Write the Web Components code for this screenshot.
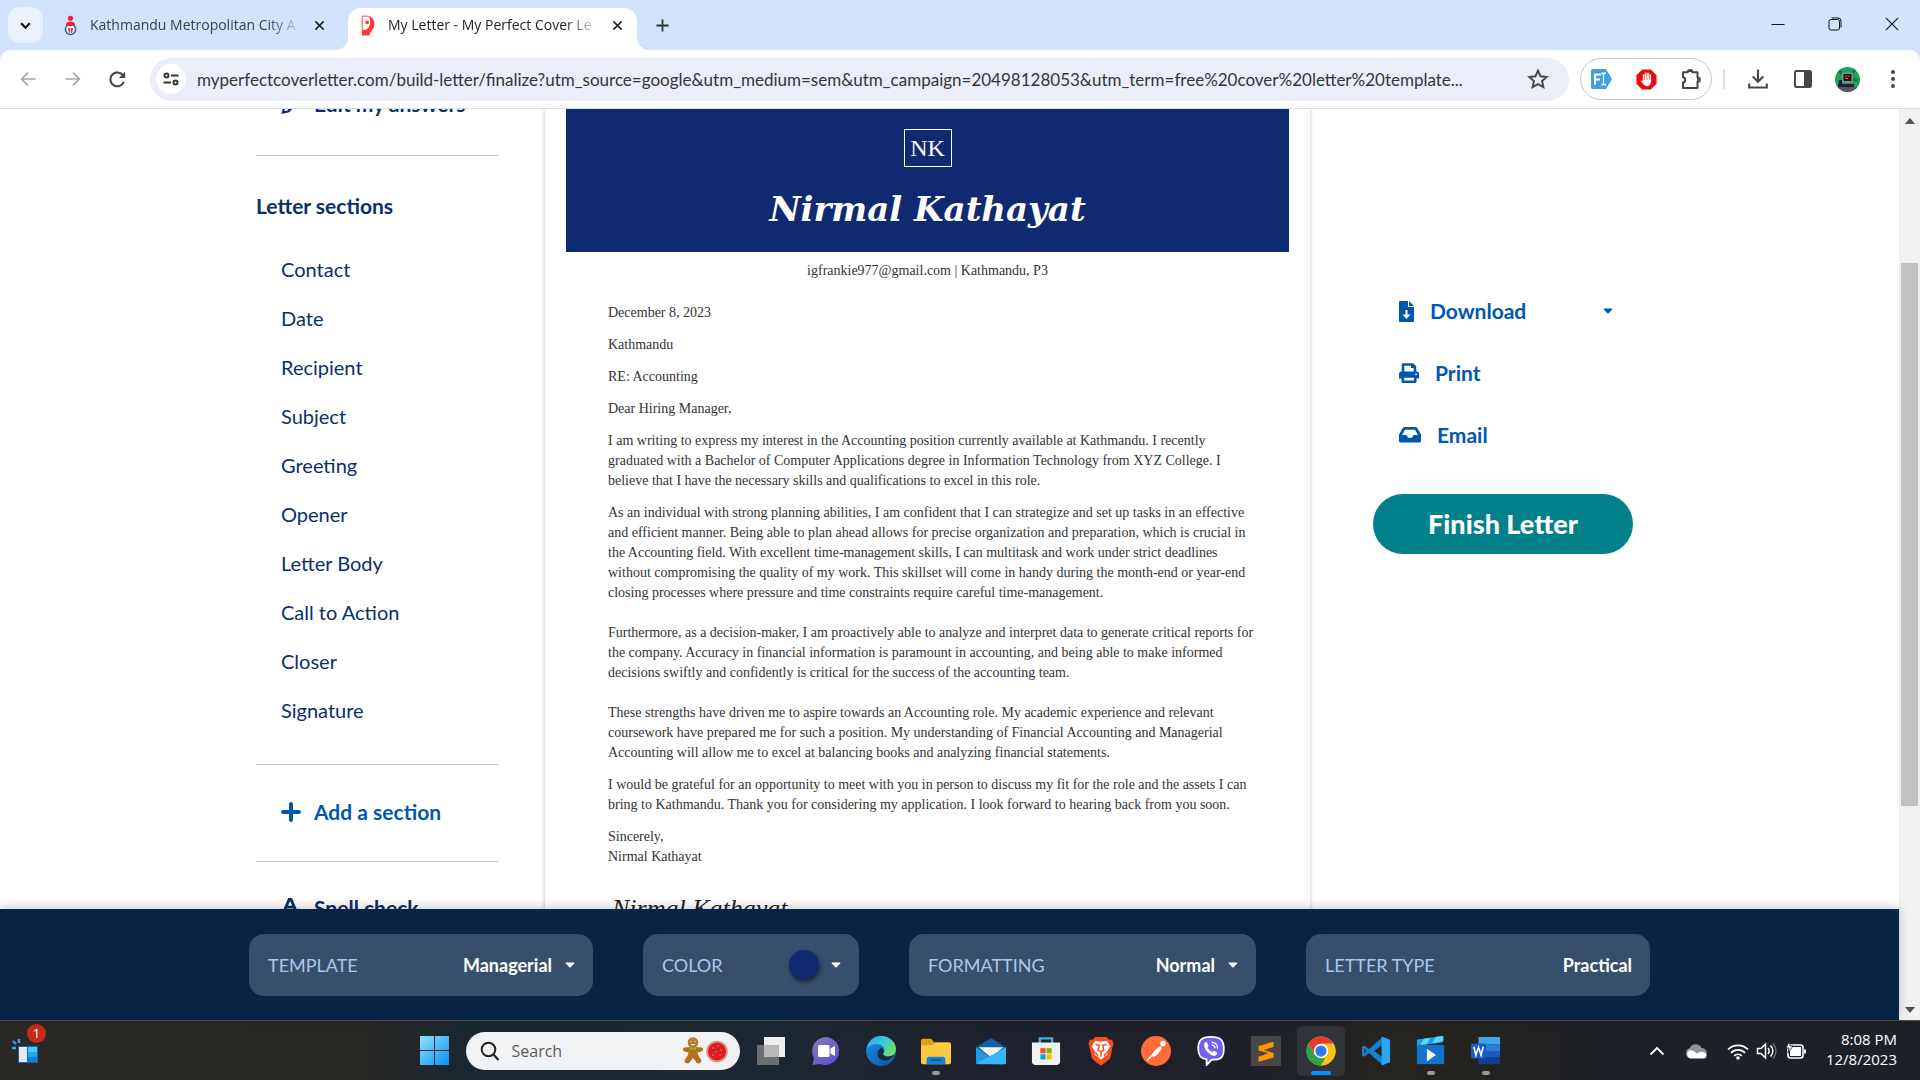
<!DOCTYPE html>
<html lang="en">
<head>
<meta charset="utf-8">
<title>My Letter - My Perfect Cover Letter</title>
<style>
  html, body { margin: 0; height: 100%; }
  body { font-family: "Open Sans", "Noto Sans", sans-serif; overflow: hidden; background: #fff; }
</style>
</head>
<body>
<desktop-shell></desktop-shell>

<script>
const ICONS = {
  chevron: ['0 0 12 12', '<path d="M2 4l4 4 4-4" fill="none" stroke="currentColor" stroke-width="2"/>'],
  close: ['0 0 12 12', '<path d="M1.500 1.500l9 9m0-9l-9 9" fill="none" stroke="currentColor" stroke-width="1.700"/>'],
  plus: ['0 0 16 16', '<path d="M8 1.500v13M1.500 8h13" fill="none" stroke="currentColor" stroke-width="1.900"/>'],
  kathmandu: ['0 0 20 24', '<circle cx="10" cy="16.500" r="6" fill="#fff" stroke="#1d6f82" stroke-width="1.800"/><circle cx="10" cy="3.500" r="3" fill="#f02040"/><path d="M4.500 11c.5-3 2.500-3.800 5.500-3.800s5 .8 5.500 3.800c-1.500 1.300-3.500 1.800-5.500 1.800S6 12.300 4.500 11z" fill="#f02040"/><path d="M7 15h2.500v5.500L8 21zM13 15h-2.500v5.500L12 21z" fill="#e0304a"/>'],
  mpcl: ['0 0 16 24', '<path d="M1.500 18V1.500H7a7.500 7.500 0 0 1 7.500 7.500" fill="none" stroke="#ff8580" stroke-width="1.800"/><path d="M1 23.500V17.500c5 0 8-2 9-6 .8-3 .5-7-.8-9.500 4 1.300 6.300 4.500 6.100 9-.2 5-4.300 7-5.800 12.500z" fill="#ff3b36"/><circle cx="7" cy="8.500" r="2.100" fill="#ff3b36"/>'],
  minimize: ['0 0 14 14', '<path d="M.5 7.500h13" stroke="#111" stroke-width="1"/>'],
  restore: ['0 0 14 14', '<rect x="1" y="2.500" width="10.500" height="10.500" rx="2" fill="none" stroke="#111"/><path d="M3.500 1h6.500a3 3 0 0 1 3 3v6.500" fill="none" stroke="#111"/>'],
  winclose: ['0 0 14 14', '<path d="M.8.8l12.400 12.400m0-12.400L.8 13.200" stroke="#111" stroke-width="1.100"/>'],
  back: ['0 0 16 16', '<path d="M15.500 8H2M8 1.600L1.600 8 8 14.400" fill="none" stroke="currentColor" stroke-width="1.700"/>'],
  forward: ['0 0 16 16', '<path d="M.5 8H14M8 1.600L14.400 8 8 14.400" fill="none" stroke="currentColor" stroke-width="1.700"/>'],
  reload: ['0 0 16 16', '<path d="M13.900 10.200A6.500 6.500 0 1 1 13 3.900" fill="none" stroke="currentColor" stroke-width="2"/><path d="M15.200.5v6H9.400z" fill="currentColor"/>'],
  tune: ['0 0 16 14', '<g fill="none" stroke="#333" stroke-width="2"><circle cx="3.500" cy="3.500" r="2"/><path d="M8 3.500h7.500M.5 10.500H8"/><circle cx="12.500" cy="10.500" r="2"/></g>'],
  star: ['0 0 20 20', '<path d="M10 2.400l2.300 5.100 5.600.6-4.200 3.800 1.200 5.500L10 14.600l-4.900 2.800 1.200-5.500L2.100 8.100l5.600-.6z" fill="none" stroke="currentColor" stroke-width="1.800"/>'],
  fi: ['0 0 21 20', '<path d="M1.500 0H15l6 10-6 10H1.500A1.500 1.500 0 0 1 0 18.500v-17A1.500 1.500 0 0 1 1.500 0z" fill="#3f9fe0"/><path d="M4 16V5.500h6M4 10.500h5" fill="none" stroke="#fff" stroke-width="2"/><path d="M10.500 4c1.500 0 2 .5 2 1.500v9c0 1-.5 1.500-2 1.500M15 4c-1.500 0-2.500.5-2.500 1.500v9c0 1 1 1.500 2.500 1.500" fill="none" stroke="#fff" stroke-width="1.300"/>'],
  adblock: ['0 0 22 22', '<path d="M6.500.5h9l6 6v9l-6 6h-9l-6-6v-9z" fill="#ea0b0b"/><path d="M8 6v7M10.300 4.500v8M12.600 4.500v8M14.900 6v7" stroke="#fff" stroke-width="1.700" stroke-linecap="round"/><path d="M7.200 11.500h8.500c0 4-1 6.500-4 6.500-2.500 0-4.500-2.200-6.500-5.300.6-.9 1.400-.6 2 .1z" fill="#fff"/>'],
  puzzle: ['0 0 22 22', '<path d="M3 4.200h4.800a2.300 2.300 0 0 1 4.600 0h5.100v5.200a2.300 2.300 0 0 1 0 4.600v6H3v-5.500c3-.5 3-4.700 0-5.200z" fill="none" stroke="currentColor" stroke-width="2" stroke-linejoin="round"/><path d="M17 9.400a2.400 2.400 0 0 1 0 4.700zM7.800 4a2.400 2.400 0 0 1 4.700 0z" fill="currentColor"/>'],
  download: ['0 0 20 20', '<path d="M10 .5v12M4.800 7.600l5.200 5.200 5.200-5.200M1.200 14.500v4h17.600v-4" fill="none" stroke="currentColor" stroke-width="2.100"/>'],
  panel: ['0 0 18 18', '<rect x="1" y="1" width="16" height="16" rx="1.500" fill="none" stroke="currentColor" stroke-width="2"/><path d="M10 1h7v16h-7z" fill="currentColor"/>'],
  avatar: ['0 0 25 25', '<clipPath id="c"><circle cx="12.500" cy="12.500" r="12.500"/></clipPath><g clip-path="url(#c)"><path d="M0 0h25v25H0z" fill="#19a55c"/><path d="M3 3l6 5M20 3l-5 6M23 14l-6-2" stroke="#0f7d43" stroke-width="3"/><path d="M7 5.500h11v10H7z" fill="#8d8d9c"/><path d="M8.500 7h8v7h-8z" fill="#2a1313"/><path d="M10 9h1.500M12.500 9h2M10 11.500h3" stroke="#e0592d" stroke-width="1.200"/><path d="M4 13h3v4h12v3H3z" fill="#241c2b"/><path d="M1 20h23v5H1z" fill="#5a5268"/></g>'],
  dots: ['0 0 6 20', '<g fill="currentColor"><circle cx="3" cy="3" r="2"/><circle cx="3" cy="10" r="2"/><circle cx="3" cy="17" r="2"/></g>'],
  caret: ['0 0 10 6', '<path d="M1.200.5h7.600c.6 0 .8.600.4 1L5.600 5.300a.9.900 0 0 1-1.200 0L.8 1.500c-.4-.4-.2-1 .4-1z" fill="currentColor"/>'],
  up: ['0 0 10 6', '<path d="M5 0l5 6H0z" fill="#505050"/>'],
  down: ['0 0 10 6', '<path d="M5 6L0 0h10z" fill="#505050"/>'],
  pen: ['0 0 20 20', '<path d="M2 18.500l1.200-6L13.500 2.200l4.600 4.500L7.600 17.200z" fill="none" stroke="currentColor" stroke-width="2.200"/><path d="M7 15.500l4-3.500" stroke="currentColor" stroke-width="2"/>'],
  add: ['0 0 20 20', '<path d="M10 2v16M2 10h16" stroke="currentColor" stroke-width="4" stroke-linecap="round"/>'],
  spell: ['0 0 22 22', '<path d="M3.500 14.500L9 1.500h2l5.500 13M5.500 10h9" fill="none" stroke="currentColor" stroke-width="3.200"/><path d="M8 18l4 3.500 9-9" fill="none" stroke="currentColor" stroke-width="3"/>'],
  file: ['0 0 15 21', '<path d="M1 0h8v6h6v14a1 1 0 0 1-1 1H1a1 1 0 0 1-1-1V1a1 1 0 0 1 1-1z" fill="currentColor"/><path d="M10 0l5 5h-5z" fill="currentColor"/><path d="M6.500 9h2v4.500h3L7.500 18l-4-4.500h3z" fill="#fff"/>'],
  print: ['0 0 20 20', '<path d="M4 10V1.500h9.500L16 4v6" fill="none" stroke="currentColor" stroke-width="2.600" stroke-linejoin="round"/><path d="M12 1v4h4V3l-2-2z" fill="currentColor"/><path d="M2.500 8.500h15A2.500 2.500 0 0 1 20 11v4.500H0V11a2.500 2.500 0 0 1 2.500-2.500z" fill="currentColor"/><path d="M3.800 13.500h12.400v5.200H3.800z" fill="#fff" stroke="currentColor" stroke-width="2.600" stroke-linejoin="round"/><circle cx="17" cy="11.300" r=".9" fill="#fff"/>'],
  inbox: ['0 0 22 16' , '<path d="M5.500 0h11a2 2 0 0 1 1.700.9L22 7.500V14a1.500 1.500 0 0 1-1.500 1.500h-19A1.500 1.500 0 0 1 0 14V7.500L3.800.9A2 2 0 0 1 5.500 0z" fill="currentColor"/><path d="M6 2.700h10L19 8h-4.500l-1.500 2.700H9L7.500 8H3z" fill="#fff"/>'],
  widgets: ['0 0 28 34', '<path d="M7 15h20v17H7z" fill="#1268b8"/><path d="M8 16h8v15H8z" fill="#e4eaf0"/><path d="M17 16h9v5h-9z" fill="#4cc8f6"/><path d="M17 21h9v5h-9z" fill="#24a6f0"/><path d="M17 26h9v5h-9z" fill="#0c82dc"/><path d="M2 10l3 3M8 8v4M1 17h4" stroke="#2aa8e8" stroke-width="2.400"/>'],
  windows: ['0 0 28 28', '<defs><linearGradient id="w" x2="1" y2="1"><stop stop-color="#8fe4fd"/><stop offset="1" stop-color="#0a8ffa"/></linearGradient></defs><path d="M0 0h13.500v13.500H0zM14.500 0H28v13.500H14.500zM0 14.500h13.500V28H0zM14.500 14.500H28V28H14.500z" fill="url(#w)"/>'],
  search: ['0 0 20 20', '<circle cx="8.500" cy="8.500" r="6.800" fill="none" stroke="#222" stroke-width="2"/><path d="M13.500 13.500l5 5.500" stroke="#222" stroke-width="2.200"/>'],
  ginger: ['0 0 46 28', '<path d="M7.500 10c2-.8 5-.8 7 0l5 .5c2 .5 2 3.500 0 4l-4 1c0 2.500 1.500 4 3.500 7 1.500 2.500-1.500 5-4 3.500L11 21l-4 5c-2.500 1.500-5.500-1-4-3.500 2-3 3.500-4.500 3.500-7l-4-1c-2-.5-2-3.500 0-4z" fill="#b5701f"/><circle cx="11" cy="5.500" r="5.300" fill="#bd7826"/><path d="M8 9.500l3 1.500 3-1.500v4L11 12l-3 1.500z" fill="#6fc22a"/><path d="M9 4v1M13 4v1M9 7.300q2 1.500 4 0" stroke="#fff" fill="none"/><circle cx="35" cy="14.500" r="10.800" fill="#d89a78"/><circle cx="35" cy="14.500" r="9" fill="#dd1b22"/><g fill="#ff8d7a"><circle cx="31" cy="11" r=".8"/><circle cx="36" cy="9" r=".8"/><circle cx="39" cy="13" r=".8"/><circle cx="34" cy="15" r=".8"/><circle cx="38" cy="18" r=".8"/><circle cx="31" cy="18" r=".8"/></g>'],
  taskview: ['0 0 30 30', '<path d="M8 1h21v20H8z" fill="#eee"/><path d="M1 9h22v20H1z" fill="#777" opacity=".9"/><path d="M8 9h15v12H8z" fill="#b9b9b9"/>'],
  chat: ['0 0 30 30', '<defs><linearGradient id="ch" x2=".7" y2="1"><stop stop-color="#8a78b8"/><stop offset="1" stop-color="#5a55d0"/></linearGradient></defs><path d="M15 1a14 14 0 1 1-6 27l-7.500 1L3 22A14 14 0 0 1 15 1z" fill="url(#ch)"/><rect x="7" y="9" width="11.500" height="12" rx="1.500" fill="#fff"/><path d="M19.500 12.500L24 10v10l-4.500-2.500z" fill="#fff"/>'],
  edge: ['0 0 30 30', '<defs><linearGradient id="e1" x2="1" y2=".5"><stop stop-color="#2aa7e6"/><stop offset=".6" stop-color="#3cc8d8"/><stop offset="1" stop-color="#6fe06a"/></linearGradient><linearGradient id="e2" x2="1" y2="1"><stop stop-color="#1b8ee0"/><stop offset="1" stop-color="#0a55a8"/></linearGradient></defs><circle cx="15" cy="15" r="15" fill="url(#e2)"/><path d="M1 13C2 5 8 0 15 0c8.500 0 15 6 15 13 0 5-3.500 7.500-8 7.500-4 0-5.500-2-4.500-3.500 2-3 .5-7.500-4.500-8.500C8.500 7.500 3.500 9 1 13z" fill="url(#e1)"/><path d="M17.500 17c-1 1.500.5 3.500 4.500 3.500 2.500 0 4.500-.8 6.200-2.200C26.500 22 22 25 18 24.500c-5-.6-7.500-5-6-9.500 1-2.500 3-3.500 4-3 2 1.500 2.500 3.500 1.500 5z" fill="#1d2a3a"/>'],
  explorer: ['0 0 32 30', '<path d="M0 4a2 2 0 0 1 2-2h9l3 4h16a2 2 0 0 1 2 2v6H0z" fill="#e0a010"/><path d="M0 9l12-.5L15 6h15a2 2 0 0 1 2 2v19a2 2 0 0 1-2 2H2a2 2 0 0 1-2-2z" fill="#fdca3f"/><path d="M6 29v-5.500A2.500 2.500 0 0 1 8.500 21h15a2.500 2.500 0 0 1 2.500 2.500V29z" fill="#1580d4"/><path d="M10 24.500h12" stroke="#0a4f90" stroke-width="1.500"/>'],
  mail: ['0 0 32 30', '<path d="M0 11L16 1l16 10v6H0z" fill="#0d5fae"/><path d="M3 11h26L16 22z" fill="#f2f2f2"/><path d="M0 11l16 11L32 11v16a2 2 0 0 1-2 2H2a2 2 0 0 1-2-2z" fill="#1f9be8"/><path d="M0 28.500L32 11v16a2 2 0 0 1-2 2z" fill="#35b6f5"/>'],
  store: ['0 0 32 32', '<path d="M9.500 8V2.500h13V8" fill="none" stroke="#3ab4ea" stroke-width="2.500"/><path d="M1 7h30v20a4 4 0 0 1-4 4H5a4 4 0 0 1-4-4z" fill="#f0f0f0"/><path d="M10 13h5.500v5.500H10z" fill="#f25022"/><path d="M16.500 13H22v5.500h-5.500z" fill="#7fba00"/><path d="M10 19.500h5.500V25H10z" fill="#00a4ef"/><path d="M16.500 19.500H22V25h-5.500z" fill="#ffb900"/>'],
  brave: ['0 0 28 32', '<path d="M8 1h12l2.500 3L26 4l1.500 5-1 2L24 23c-.5 2-6 6-10 8.500C10 29 4.500 25 4 23L1.500 11l-1-2L2 4l3.500 0z" fill="#fb4a1e"/><path d="M14 6l6-1 4 6-4 6 1 3-4 2.500-3 3-3-3L7 20l1-3-4-6 4-6z" fill="#fff"/><path d="M8 9l4 1-1 5 3 2 3-2-1-5 4-1M8 18l3 3M20 18l-3 3M14 17v5" fill="none" stroke="#fb4a1e" stroke-width="1.600"/>'],
  postman: ['0 0 32 32', '<circle cx="16" cy="16" r="15" fill="#ff6c37"/><circle cx="23" cy="8.500" r="2.700" fill="#fff"/><path d="M21 11c-3 1-8 6-9.500 9l2 2c3.500-1.500 7-6 8.500-9z" fill="#fff"/><path d="M12 20.500l-5 5" stroke="#fff" stroke-width="1.600"/>'],
  viber: ['0 0 32 34', '<path d="M16 1c10 0 14.500 3 14.500 13.500S27 27 16.500 27L11 33v-6.500C4 25.500 1.500 22 1.500 14.500 1.500 4 6 1 16 1z" fill="#7360f2" stroke="#fff" stroke-width="2"/><path d="M9 7.500c1.500-1.500 2.500-.5 3.500 1.500s.5 2.500-.5 3.500c1 3 2.500 4.500 5.500 5.500 1-1 1.500-1.500 3.500-.5 2 1 3 2 1.500 3.500-1.500 2-3 2-6 .5-4-2-6.500-5-7.700-8.500C8 10.500 8 9 9 7.500z" fill="#fff"/><path d="M16.500 7c4.500.5 7 3 7 7.500M17 10c2.500.3 3.500 1.500 3.700 4" fill="none" stroke="#fff" stroke-width="1.400"/>'],
  sublime: ['0 0 32 32', '<path d="M0 0h32v32H0z" fill="#474747"/><path d="M8 11l16-5v5.500L13.500 15 24 18v5L8 27.500V22l10.500-3.500L8 15.500z" fill="#ff9800"/>'],
  chrome: ['0 0 32 32', '<circle cx="16" cy="16" r="15.500" fill="#fbc116"/><path d="M2.600 8.200A15.500 15.500 0 0 1 29.400 8.200H16L9.300 19.900z" fill="#e33b2e"/><path d="M2.600 8.200L9.300 19.900 16 23.800h6.700L16 31.500A15.500 15.500 0 0 1 2.600 8.200z" fill="#2ba24c"/><path d="M22.700 19.900L16 31.500A15.500 15.500 0 0 0 29.400 8.200H16z" fill="#fbc116"/><circle cx="16" cy="16" r="7.700" fill="#fff"/><circle cx="16" cy="16" r="6" fill="#2c7be8"/>'],
  vscode: ['0 0 32 32', '<path d="M23 1L8.500 14 3.500 10 1 11.500V20.500L3.500 22 8.500 18 23 31V23L14 16 23 9z" fill="#1483cf"/><path d="M3.500 13v6L6 16z" fill="#22232a"/><path d="M22 .5L31 4v24l-9 3.500z" fill="#2aa6f0"/>'],
  movies: ['0 0 32 34', '<path d="M1 5L30 1v7L1 12z" fill="#1aa0e8"/><path d="M9 4l7-1-4 7-7 1zM22 2l8-1v5l-5 2-7 1z" fill="#4fdcf8"/><path d="M1 11h30v21H1z" fill="#1272cc"/><path d="M12 15l10 7-10 7z" fill="#fff"/>'],
  word: ['0 0 32 32', '<path d="M8 1h22a1 1 0 0 1 1 1v7H8z" fill="#41a5ee"/><path d="M8 9h23v7H8z" fill="#2b7cd3"/><path d="M8 16h23v7H8z" fill="#185abd"/><path d="M8 23h23v6a1 1 0 0 1-1 1H8z" fill="#103f91"/><rect y="8" width="16" height="16" rx="1.500" fill="#1b5cbe"/><path d="M3 11.500l2.200 9L8 12l2.800 8.500 2.200-9" fill="none" stroke="#fff" stroke-width="1.700"/>'],
  trayup: ['0 0 16 10', '<path d="M1.500 8.500L8 2l6.500 6.500" fill="none" stroke="#fff" stroke-width="1.800"/>'],
  cloud: ['0 0 22 16', '<path d="M5.500 15a5 5 0 0 1-.8-9.800A6.500 6.500 0 0 1 16.500 5 5 5 0 0 1 17 15z" fill="#8f9296"/><path d="M5.500 15.500a4.500 4.500 0 0 1-.5-8.500c3 0 5 2 7 3.500l3-1.500c3-1 6.500 1 6.500 3.500a3 3 0 0 1-3 3z" fill="#fff"/>'],
  wifi: ['0 0 22 18', '<path d="M1 7.500a14 14 0 0 1 20 0M4 10.800a9.800 9.800 0 0 1 14 0M7.200 13.800a5.600 5.600 0 0 1 7.600 0" fill="none" stroke="#fff" stroke-width="1.700"/><circle cx="11" cy="16" r="1.800" fill="#fff"/>'],
  volume: ['0 0 22 18', '<path d="M1.500 6.500H5L9.500 2v14L5 11.500H1.500z" fill="none" stroke="#fff" stroke-width="1.500"/><path d="M12 6c1.500 2 1.500 4 0 6M14.500 3.500c3 3.500 3 7.500 0 11" fill="none" stroke="#fff" stroke-width="1.500"/><path d="M17 1.500c4 5 4 10 0 15" fill="none" stroke="#6c7076" stroke-width="1.300"/>'],
  battery: ['0 0 22 20', '<rect x="3" y="4" width="15" height="13" rx="2.500" fill="none" stroke="#fff" stroke-width="1.600"/><path d="M5 6h11v9H5z" fill="#fff"/><path d="M19 8.500h2v4h-2z" fill="#fff"/><path d="M4.500 0L1 7h3l-1 5 5-7H5z" fill="#fff" stroke="#1d2127" stroke-width=".8"/>']
};

class BaseElement extends HTMLElement {
  connectedCallback() {
    if (this.shadowRoot) return;
    this.attachShadow({ mode: 'open' }).innerHTML =
      '<style>:host,*{box-sizing:border-box}button{font:inherit;color:inherit;background:none;border:0;padding:0;margin:0}' +
      this.css() + '</style>' + this.html();
  }
}
const define = (name, css, html) => customElements.define(name, class extends BaseElement {
  css() { return typeof css === 'function' ? css(this) : css; }
  html() { return typeof html === 'function' ? html(this) : html; }
});

define('app-icon',
  el => `:host{display:inline-flex;flex:none}svg{display:block;width:${el.getAttribute('w')}px;height:${el.getAttribute('h') || el.getAttribute('w')}px}`,
  el => { const [box, body] = ICONS[el.getAttribute('name')]; return `<svg viewBox="${box}" aria-hidden="true">${body}</svg>`; });

define('icon-button', `
  :host{display:flex;flex:none;width:45px;height:42px}
  button{width:100%;display:flex;align-items:center;justify-content:center}`,
  el => `<button aria-label="${el.getAttribute('label')}"><slot></slot></button>`);

define('browser-tab', `
  :host{display:flex;align-items:center;height:42px;width:289px;flex:none;padding:0 8px 8px 10px;color:#3c3f45;font-size:14px;gap:10px;position:relative}
  :host([active]){background:#fff;border-radius:13px 13px 0 0;color:#1f1f1f}
  :host([active])::before,:host([active])::after{content:"";position:absolute;bottom:0;width:12px;height:12px}
  :host([active])::before{left:-12px;background:radial-gradient(circle at 0 0,transparent 12px,#fff 12px)}
  :host([active])::after{right:-12px;background:radial-gradient(circle at 100% 0,transparent 12px,#fff 12px)}
  .title{flex:1;overflow:hidden;white-space:nowrap;line-height:24px;-webkit-mask:linear-gradient(90deg,#000 86%,rgba(0,0,0,.15) 100%);mask:linear-gradient(90deg,#000 86%,rgba(0,0,0,.15) 100%)}
  button{width:24px;height:24px;display:flex;align-items:center;justify-content:center;color:#222}
  .fav{width:20px;display:flex;justify-content:center}`,
  `<span class="fav"><slot name="icon"></slot></span><span class="title"><slot></slot></span><button aria-label="Close tab"><app-icon name="close" w="11"></app-icon></button>`);

define('tab-strip', `
  :host{display:flex;height:50px;background:#d3e2fd;padding-left:8px;flex:none}
  .menu{width:35px;height:36px;border-radius:12px;background:#eaf1fe;margin-top:7px;display:flex;align-items:center;justify-content:center;color:#111}
  .tabs{display:flex;flex:1;align-items:flex-end;margin-left:7px;gap:9px}
  .window{display:flex}
  .window icon-button{width:57px;height:48px}
  .new{width:32px;height:50px;color:#333}`,
  `<button class="menu" aria-label="Search tabs"><app-icon name="chevron" w="13"></app-icon></button>
   <div class="tabs">
     <browser-tab><app-icon slot="icon" name="kathmandu" w="17" h="21"></app-icon>Kathmandu Metropolitan City A</browser-tab>
     <browser-tab active><app-icon slot="icon" name="mpcl" w="14" h="21"></app-icon>My Letter - My Perfect Cover Le</browser-tab>
     <icon-button class="new" label="New tab"><app-icon name="plus" w="15"></app-icon></icon-button>
   </div>
   <div class="window">
     <icon-button label="Minimize"><app-icon name="minimize" w="14"></app-icon></icon-button>
     <icon-button label="Restore"><app-icon name="restore" w="14"></app-icon></icon-button>
     <icon-button label="Close"><app-icon name="winclose" w="14"></app-icon></icon-button>
   </div>`);

define('browser-toolbar', `
  :host{display:block;flex:none;background:#d3e2fd;color:#474747}
  .bar{display:flex;align-items:center;height:59px;background:#fff;border-bottom:1px solid #dedede;padding:0 5px;border-radius:10px 10px 0 0}
  .off{color:#a6a6a6}
  .address{flex:1;display:flex;align-items:center;height:43px;border-radius:22px;background:#ebeef8;margin:0 11px 0 10px;padding:0 9px 0 6px}
  .site{width:30px;height:30px;border-radius:50%;background:#fff;display:flex;align-items:center;justify-content:center}
  input{flex:1;min-width:0;border:0;background:none;outline:0;padding:0;margin-left:11px;font:17px Lato,"Noto Sans",sans-serif;color:#33353a;height:28px}
  .ext{display:flex;width:132px;height:42px;border:1px solid #c7c7c7;border-radius:21px;justify-content:center;align-items:center}
  .sep{width:2px;height:20px;background:#d3e2fd;margin:0 10px 0 11px}`,
  `<div class="bar">
     <icon-button class="off" label="Back"><app-icon name="back" w="16"></app-icon></icon-button>
     <icon-button class="off" label="Forward"><app-icon name="forward" w="16"></app-icon></icon-button>
     <icon-button label="Reload"><app-icon name="reload" w="17"></app-icon></icon-button>
     <div class="address">
       <button class="site" aria-label="Site information"><app-icon name="tune" w="16" h="14"></app-icon></button>
       <input aria-label="Address" value="myperfectcoverletter.com/build-letter/finalize?utm_source=google&amp;utm_medium=sem&amp;utm_campaign=20498128053&amp;utm_term=free%20cover%20letter%20template...">
       <icon-button label="Bookmark"><app-icon name="star" w="22"></app-icon></icon-button>
     </div>
     <div class="ext">
       <icon-button label="Font finder"><app-icon name="fi" w="21" h="20"></app-icon></icon-button>
       <icon-button label="Ad blocker"><app-icon name="adblock" w="21"></app-icon></icon-button>
       <icon-button label="Extensions"><app-icon name="puzzle" w="22"></app-icon></icon-button>
     </div>
     <span class="sep"></span>
     <icon-button label="Downloads"><app-icon name="download" w="20"></app-icon></icon-button>
     <icon-button label="Side panel"><app-icon name="panel" w="18"></app-icon></icon-button>
     <icon-button label="Profile"><app-icon name="avatar" w="25"></app-icon></icon-button>
     <icon-button label="Menu"><app-icon name="dots" w="6" h="20"></app-icon></icon-button>
   </div>`);

define('side-action', `
  :host{display:block}
  button{display:flex;align-items:center;gap:13px;font-size:21px;line-height:24px;font-weight:700}`,
  `<button><slot name="icon"></slot><slot></slot></button>`);

define('side-nav', `
  :host{display:block;width:242px;flex:none;color:#0a2f6c;font-size:20px;line-height:24px}
  hr{border:0;border-top:1px solid #c6c3be;margin:0}
  side-action{padding-left:25px}
  .edit{margin-top:-17px;margin-bottom:39px}
  h2{font-size:21px;line-height:24px;margin:38px 0 26px;font-weight:700}
  ul{list-style:none;margin:0;padding:0 0 30px 25px}
  li{height:49px;display:flex;align-items:center}
  a{color:inherit;text-decoration:none}
  .add{color:#0057b0;padding-top:35px;padding-bottom:37px}
  .spell{padding-top:34px}`,
  `<side-action class="edit"><app-icon slot="icon" name="pen" w="20"></app-icon>Edit my answers</side-action>
   <hr>
   <h2>Letter sections</h2>
   <nav><ul>${['Contact','Date','Recipient','Subject','Greeting','Opener','Letter Body','Call to Action','Closer','Signature'].map(t => `<li><a href="#">${t}</a></li>`).join('')}</ul></nav>
   <hr>
   <side-action class="add"><app-icon slot="icon" name="add" w="20"></app-icon>Add a section</side-action>
   <hr>
   <side-action class="spell"><app-icon slot="icon" name="spell" w="20"></app-icon>Spell check</side-action>`);

define('letter-page', `
  :host{display:block;width:765px;flex:none;padding:0 21px;box-shadow:0 0 4px #a9c8e2;background:#fff;font-family:"Liberation Serif",serif;color:#333;height:900px}
  header{background:#102a72;color:#fff;height:143px;display:flex;flex-direction:column;align-items:center;padding-top:20px}
  .mono{border:1px solid #fff;width:48px;height:38px;display:flex;align-items:center;justify-content:center;font-size:24px;line-height:28px}
  h1{margin:22px 0 0;font:italic 700 34px/40px "DejaVu Serif",serif}
  .contact{text-align:center;font-size:14px;line-height:20px;padding:9px 0 22px}
  .body{padding:0 42px;font-size:14px;line-height:20px;white-space:nowrap}
  p{margin:0 0 12px}
  .sign{font:italic 26px/32px "Liberation Serif",serif;color:#222;margin:26px 0 0 4px}`,
  `<header><div class="mono">NK</div><h1>Nirmal Kathayat</h1></header>
   <div class="contact">igfrankie977@gmail.com | Kathmandu, P3</div>
   <div class="body">
   <p>December 8, 2023</p><p>Kathmandu</p><p>RE: Accounting</p><p>Dear Hiring Manager,</p>
   <p>I am writing to express my interest in the Accounting position currently available at Kathmandu. I recently<br>graduated with a Bachelor of Computer Applications degree in Information Technology from XYZ College. I<br>believe that I have the necessary skills and qualifications to excel in this role.</p>
   <p>As an individual with strong planning abilities, I am confident that I can strategize and set up tasks in an effective<br>and efficient manner. Being able to plan ahead allows for precise organization and preparation, which is crucial in<br>the Accounting field. With excellent time-management skills, I can multitask and work under strict deadlines<br>without compromising the quality of my work. This skillset will come in handy during the month-end or year-end<br>closing processes where pressure and time constraints require careful time-management.<br><br>Furthermore, as a decision-maker, I am proactively able to analyze and interpret data to generate critical reports for<br>the company. Accuracy in financial information is paramount in accounting, and being able to make informed<br>decisions swiftly and confidently is critical for the success of the accounting team.<br><br>These strengths have driven me to aspire towards an Accounting role. My academic experience and relevant<br>coursework have prepared me for such a position. My understanding of Financial Accounting and Managerial<br>Accounting will allow me to excel at balancing books and analyzing financial statements.</p>
   <p>I would be grateful for an opportunity to meet with you in person to discuss my fit for the role and the assets I can<br>bring to Kathmandu. Thank you for considering my application. I look forward to hearing back from you soon.</p>
   <p>Sincerely,<br>Nirmal Kathayat</p>
   <div class="sign">Nirmal Kathayat</div>
   </div>`);

define('action-panel', `
  :host{display:block;width:260px;flex:none;padding-top:190px;color:#0057b0;font-size:21px;line-height:24px;font-weight:700}
  .item{display:flex;align-items:center;width:100%;height:24px;padding:0 20px 0 26px;gap:16px;margin-bottom:38px}
  .caret{margin-left:auto}
  .finish{display:block;width:100%;height:60px;border-radius:30px;background:#02818a;color:#fff;font-size:27px;line-height:32px;font-weight:900;margin-top:47px}`,
  `<button class="item"><app-icon name="file" w="15" h="21"></app-icon>Download<app-icon class="caret" name="caret" w="10" h="6"></app-icon></button>
   <button class="item"><app-icon name="print" w="20"></app-icon>Print</button>
   <button class="item"><app-icon name="inbox" w="22" h="16"></app-icon>Email</button>
   <button class="finish">Finish Letter</button>`);

define('option-pill', `
  :host{display:flex;align-items:center;height:62px;border-radius:15px;background:#364f6c;padding:0 18px 0 19px;color:#fff;font-size:18px;line-height:24px;min-width:0;gap:13px}
  label,.label{color:#a9c8ec;flex:1}
  select{appearance:none;background:none;border:0;color:#fff;font:700 18px/24px Lato,sans-serif;padding:0;margin:0;text-align:right}
  b{font-weight:700}
  .swatch{width:30px;height:30px;border-radius:50%;background:#102a72;box-shadow:1px 2px 4px rgba(0,0,0,.5)}
  .pick{display:flex;align-items:center;gap:12px}`,
  el => {
    const l = el.getAttribute('label'), v = el.getAttribute('value'), k = el.getAttribute('kind');
    const caret = '<app-icon name="caret" w="10" h="6"></app-icon>';
    if (k === 'swatch') return `<span class="label" id="l">${l}</span><button class="pick" aria-labelledby="l"><span class="swatch"></span>${caret}</button>`;
    if (k === 'text') return `<span class="label">${l}</span><b>${v}</b>`;
    return `<label for="s">${l}</label><select id="s"><option>${v}</option></select>${caret}`;
  });

define('option-bar', `
  :host{display:flex;justify-content:center;background:#0a2244;height:111px;flex:none;align-items:flex-start;padding-top:25px;box-shadow:0 -2px 10px rgba(0,0,0,.2);z-index:1}
  .row{display:grid;grid-template-columns:344fr 216fr 347fr 344fr;gap:50px;width:100%;max-width:1401px}`,
  `<div class="row">
     <option-pill label="TEMPLATE" value="Managerial"></option-pill>
     <option-pill label="COLOR" kind="swatch"></option-pill>
     <option-pill label="FORMATTING" value="Normal"></option-pill>
     <option-pill label="LETTER TYPE" value="Practical" kind="text"></option-pill>
   </div>`);

define('scroll-track', `
  :host{display:flex;flex-direction:column;align-items:center;width:21px;flex:none;background:#f1f1f1;padding:9px 0 7px}
  .rail{flex:1;width:17px;display:flex;flex-direction:column;margin:0}
  .rail::before{content:"";flex:139}
  .rail::after{content:"";flex:201}
  .thumb{flex:542;background:#c1c1c1}`,
  `<app-icon name="up" w="10" h="6"></app-icon><div class="rail"><div class="thumb"></div></div><app-icon name="down" w="10" h="6"></app-icon>`);

define('web-viewport', `
  :host{display:flex;flex:1;min-height:0;font-family:Lato,sans-serif;background:#fff}
  .page{flex:1;min-width:0;display:flex;flex-direction:column}
  .content{flex:1;min-height:0;overflow:hidden;display:flex;justify-content:center}
  .cols{display:flex;width:100%;max-width:1401px;padding:0 17px 0 7px;justify-content:space-between;align-items:flex-start}
  side-nav{margin-right:-16px}`,
  `<div class="page">
     <div class="content"><div class="cols"><side-nav></side-nav><letter-page></letter-page><action-panel></action-panel></div></div>
     <option-bar></option-bar>
   </div>
   <scroll-track></scroll-track>`);

define('task-app', `
  :host{display:flex;width:48px;height:50px;border-radius:5px;position:relative;flex:none}
  :host([active]){background:#30333a}
  button{width:100%;display:flex;align-items:center;justify-content:center}
  :host([running])::after,:host([active])::after{content:"";position:absolute;bottom:1px;left:20px;width:8px;height:4px;border-radius:2px;background:#999}
  :host([active])::after{left:14px;width:20px;background:#0a8ffb}`,
  el => `<button aria-label="${el.getAttribute('name')}"><app-icon name="${el.getAttribute('name')}" w="${el.getAttribute('w') || 30}"></app-icon></button>`);

define('task-bar', `
  :host{display:grid;grid-template-columns:1fr auto 1fr;align-items:center;height:60px;flex:none;border-top:1px solid #4b4b47;color:#fff;
    background:linear-gradient(90deg,#2a2925 0,#292825 19%,#1a272e 24%,#1c2732 40%,#1e222c 50%,#1f212a 66%,#25241f 72%,#24231f 76%,#1d2127 84%,#1c2228 100%)}
  .widgets{display:block;margin-left:11px;width:36px;height:52px;position:relative}
  .widgets app-icon{display:flex;margin-top:-6px}
  .badge{position:absolute;left:16px;top:-1px;width:19px;height:19px;border-radius:50%;background:#c42b1c;font-size:13px;line-height:19px;text-align:center}
  .center{display:flex;gap:7px;align-items:center}
  .search{display:flex;align-items:center;width:274px;height:38px;border-radius:19px;background:#f1f2f4;padding:0 12px 0 14px;margin-left:0}
  .search input{flex:1;min-width:0;border:0;outline:0;background:none;font:16px "Open Sans","Noto Sans",sans-serif;margin-left:12px;padding:0;height:26px}
  .search input::placeholder{color:#5c5c5c;opacity:1}
  .tray{display:flex;justify-content:flex-end;align-items:center;padding-right:23px}
  .tray app-icon{margin-right:7px}
  .tray .w{margin-right:20px}
  .clock{text-align:right;font-size:15px;line-height:20px;margin-left:12px;padding-bottom:3px}`,
  `<div><button class="widgets" aria-label="Widgets"><app-icon name="widgets" w="28" h="34"></app-icon><span class="badge">1</span></button></div>
   <div class="center">
     <task-app name="windows" w="29"></task-app>
     <div class="search"><app-icon name="search" w="20"></app-icon><input type="text" aria-label="Search" placeholder="Search"><app-icon name="ginger" w="46" h="28"></app-icon></div>
     <task-app name="taskview"></task-app><task-app name="chat"></task-app><task-app name="edge"></task-app>
     <task-app name="explorer" running></task-app><task-app name="mail"></task-app><task-app name="store"></task-app>
     <task-app name="brave"></task-app><task-app name="postman" w="32"></task-app><task-app name="viber"></task-app>
     <task-app name="sublime"></task-app><task-app name="chrome" active></task-app><task-app name="vscode"></task-app>
     <task-app name="movies" w="31" running></task-app><task-app name="word" running></task-app>
   </div>
   <div class="tray"><app-icon class="w" name="trayup" w="16" h="10"></app-icon><app-icon class="w" name="cloud" w="22" h="16"></app-icon>
     <app-icon name="wifi" w="22" h="18"></app-icon><app-icon name="volume" w="22" h="18"></app-icon><app-icon name="battery" w="22" h="20"></app-icon>
     <div class="clock">8:08 PM<br>12/8/2023</div></div>`);

define('desktop-shell', `:host{display:flex;flex-direction:column;height:100vh}`,
  `<tab-strip></tab-strip><browser-toolbar></browser-toolbar><web-viewport></web-viewport><task-bar></task-bar>`);
</script>
</body>
</html>
